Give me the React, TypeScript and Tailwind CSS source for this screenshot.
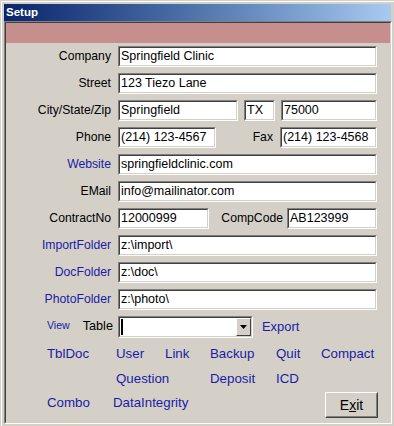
import React from 'react';

const BLUE = 'text-[#1b1ba5]';

function Box({ className, children }: { className: string; children?: React.ReactNode }) {
  return (
    <div className={`h-[21px] shrink-0 border border-t-[#808080] border-l-[#808080] border-b-white border-r-white ${className}`}>
      <div className="h-full flex items-center pl-[1px] bg-white border border-t-[#404040] border-l-[#404040] border-b-[#d4d0c8] border-r-[#d4d0c8] overflow-hidden whitespace-nowrap text-[12.5px] text-black">
        {children}
      </div>
    </div>
  );
}

function Label({ text, blue }: { text: string; blue?: boolean }) {
  return (
    <span className={`w-[112px] shrink-0 pr-[7px] text-right text-[12.2px] ${blue ? BLUE : 'text-black'}`}>{text}</span>
  );
}

export default function App() {
  return (
    <div className="w-[394px] h-[426px] bg-[#d4d0c8] pl-[1px] pt-[1px] overflow-hidden font-['Liberation_Sans',Arial,sans-serif]">
      <div className="h-full border-l border-t border-white pl-[2px] pt-[2px]">
        {/* Title bar */}
        <div className="w-[387px] h-[17px] flex items-center pl-[2px] bg-gradient-to-r from-[#0a246a] to-[#a6caf0]">
          <span className="text-white font-bold text-[11.5px]">Setup</span>
        </div>

        {/* Sunken panel */}
        <div className="w-[388px] h-[403px] border border-t-[#808080] border-l-[#808080] border-b-white border-r-white">
          <div className="h-full border border-t-[#404040] border-l-[#404040] border-b-[#d4d0c8] border-r-[#d4d0c8]">
            <div className="h-[20px] bg-[#c68f8e]" />

            <div className="mt-[3px] flex flex-col gap-[6px]">
              <div className="flex items-center">
                <Label text="Company" />
                <Box className="w-[259px]">Springfield Clinic</Box>
              </div>
              <div className="flex items-center">
                <Label text="Street" />
                <Box className="w-[259px]">123 Tiezo Lane</Box>
              </div>
              <div className="flex items-center">
                <Label text="City/State/Zip" />
                <Box className="w-[120px]">Springfield</Box>
                <Box className="w-[31px] ml-[6px]">TX</Box>
                <Box className="w-[96px] ml-[6px]">75000</Box>
              </div>
              <div className="flex items-center">
                <Label text="Phone" />
                <Box className="w-[98px]">(214) 123-4567</Box>
                <span className="w-[64px] pr-[7px] text-right text-[12.2px] text-black">Fax</span>
                <Box className="w-[97px]">(214) 123-4568</Box>
              </div>
              <div className="flex items-center">
                <Label text="Website" blue />
                <Box className="w-[259px]">springfieldclinic.com</Box>
              </div>
              <div className="flex items-center">
                <Label text="EMail" />
                <Box className="w-[259px]">info@mailinator.com</Box>
              </div>
              <div className="flex items-center">
                <Label text="ContractNo" />
                <Box className="w-[91px]">12000999</Box>
                <span className="w-[78px] pr-[4px] text-right text-[12.2px] text-black">CompCode</span>
                <Box className="w-[90px]">AB123999</Box>
              </div>
              <div className="flex items-center">
                <Label text="ImportFolder" blue />
                <Box className="w-[259px]">z:\import\</Box>
              </div>
              <div className="flex items-center">
                <Label text="DocFolder" blue />
                <Box className="w-[259px]">z:\doc\</Box>
              </div>
              <div className="flex items-center">
                <Label text="PhotoFolder" blue />
                <Box className="w-[259px]">z:\photo\</Box>
              </div>

              {/* View / Table combo row */}
              <div className="flex items-center">
                <div className="w-[112px] shrink-0 flex items-center justify-between pl-[41px] pr-[5px]">
                  <span className={`text-[10.6px] ${BLUE} -mt-[3px]`}>View</span>
                  <span className="text-[12.7px] text-black">Table</span>
                </div>
                <div className="w-[135px] h-[22px] border border-t-[#808080] border-l-[#808080] border-b-white border-r-white">
                  <div className="h-full flex items-center bg-white border border-t-[#404040] border-l-[#404040] border-b-[#d4d0c8] border-r-[#d4d0c8]">
                    <div className="ml-[1px] w-[2px] h-[16px] bg-black" />
                    <div className="ml-auto w-[15px] h-full flex items-center justify-center bg-[#d4d0c8] border border-t-white border-l-white border-b-[#404040] border-r-[#404040]">
                      <svg width="7" height="4" viewBox="0 0 7 4">
                        <path d="M0 0H7L3.5 4Z" fill="#000" />
                      </svg>
                    </div>
                  </div>
                </div>
                <span className={`ml-[9px] text-[12.9px] ${BLUE}`}>Export</span>
              </div>
            </div>

            {/* Command links */}
            <div className={`mt-[8px] text-[13.3px] leading-[16px] ${BLUE}`}>
              <div className="flex h-[16px] pl-[41px]">
                <span className="w-[69px]">TblDoc</span>
                <span className="w-[49px]">User</span>
                <span className="w-[45px]">Link</span>
                <span className="w-[66px]">Backup</span>
                <span className="w-[45px]">Quit</span>
                <span>Compact</span>
              </div>
              <div className="flex h-[16px] mt-[9px] pl-[110px]">
                <span className="w-[94px]">Question</span>
                <span className="w-[66px]">Deposit</span>
                <span>ICD</span>
              </div>
              <div className="flex h-[26px] mt-[5px] pl-[41px]">
                <span className="w-[66px] mt-[3px]">Combo</span>
                <span className="mt-[3px]">DataIntegrity</span>
                <div className="ml-auto mr-[12px] w-[53px] h-[26px] border border-t-white border-l-white border-b-[#404040] border-r-[#404040]">
                  <div className="h-full flex items-center justify-center border border-t-[#d4d0c8] border-l-[#d4d0c8] border-b-[#808080] border-r-[#808080] text-black text-[14px]">
                    E<span className="underline">x</span>it
                  </div>
                </div>
              </div>
            </div>
          </div>
        </div>
      </div>
    </div>
  );
}
